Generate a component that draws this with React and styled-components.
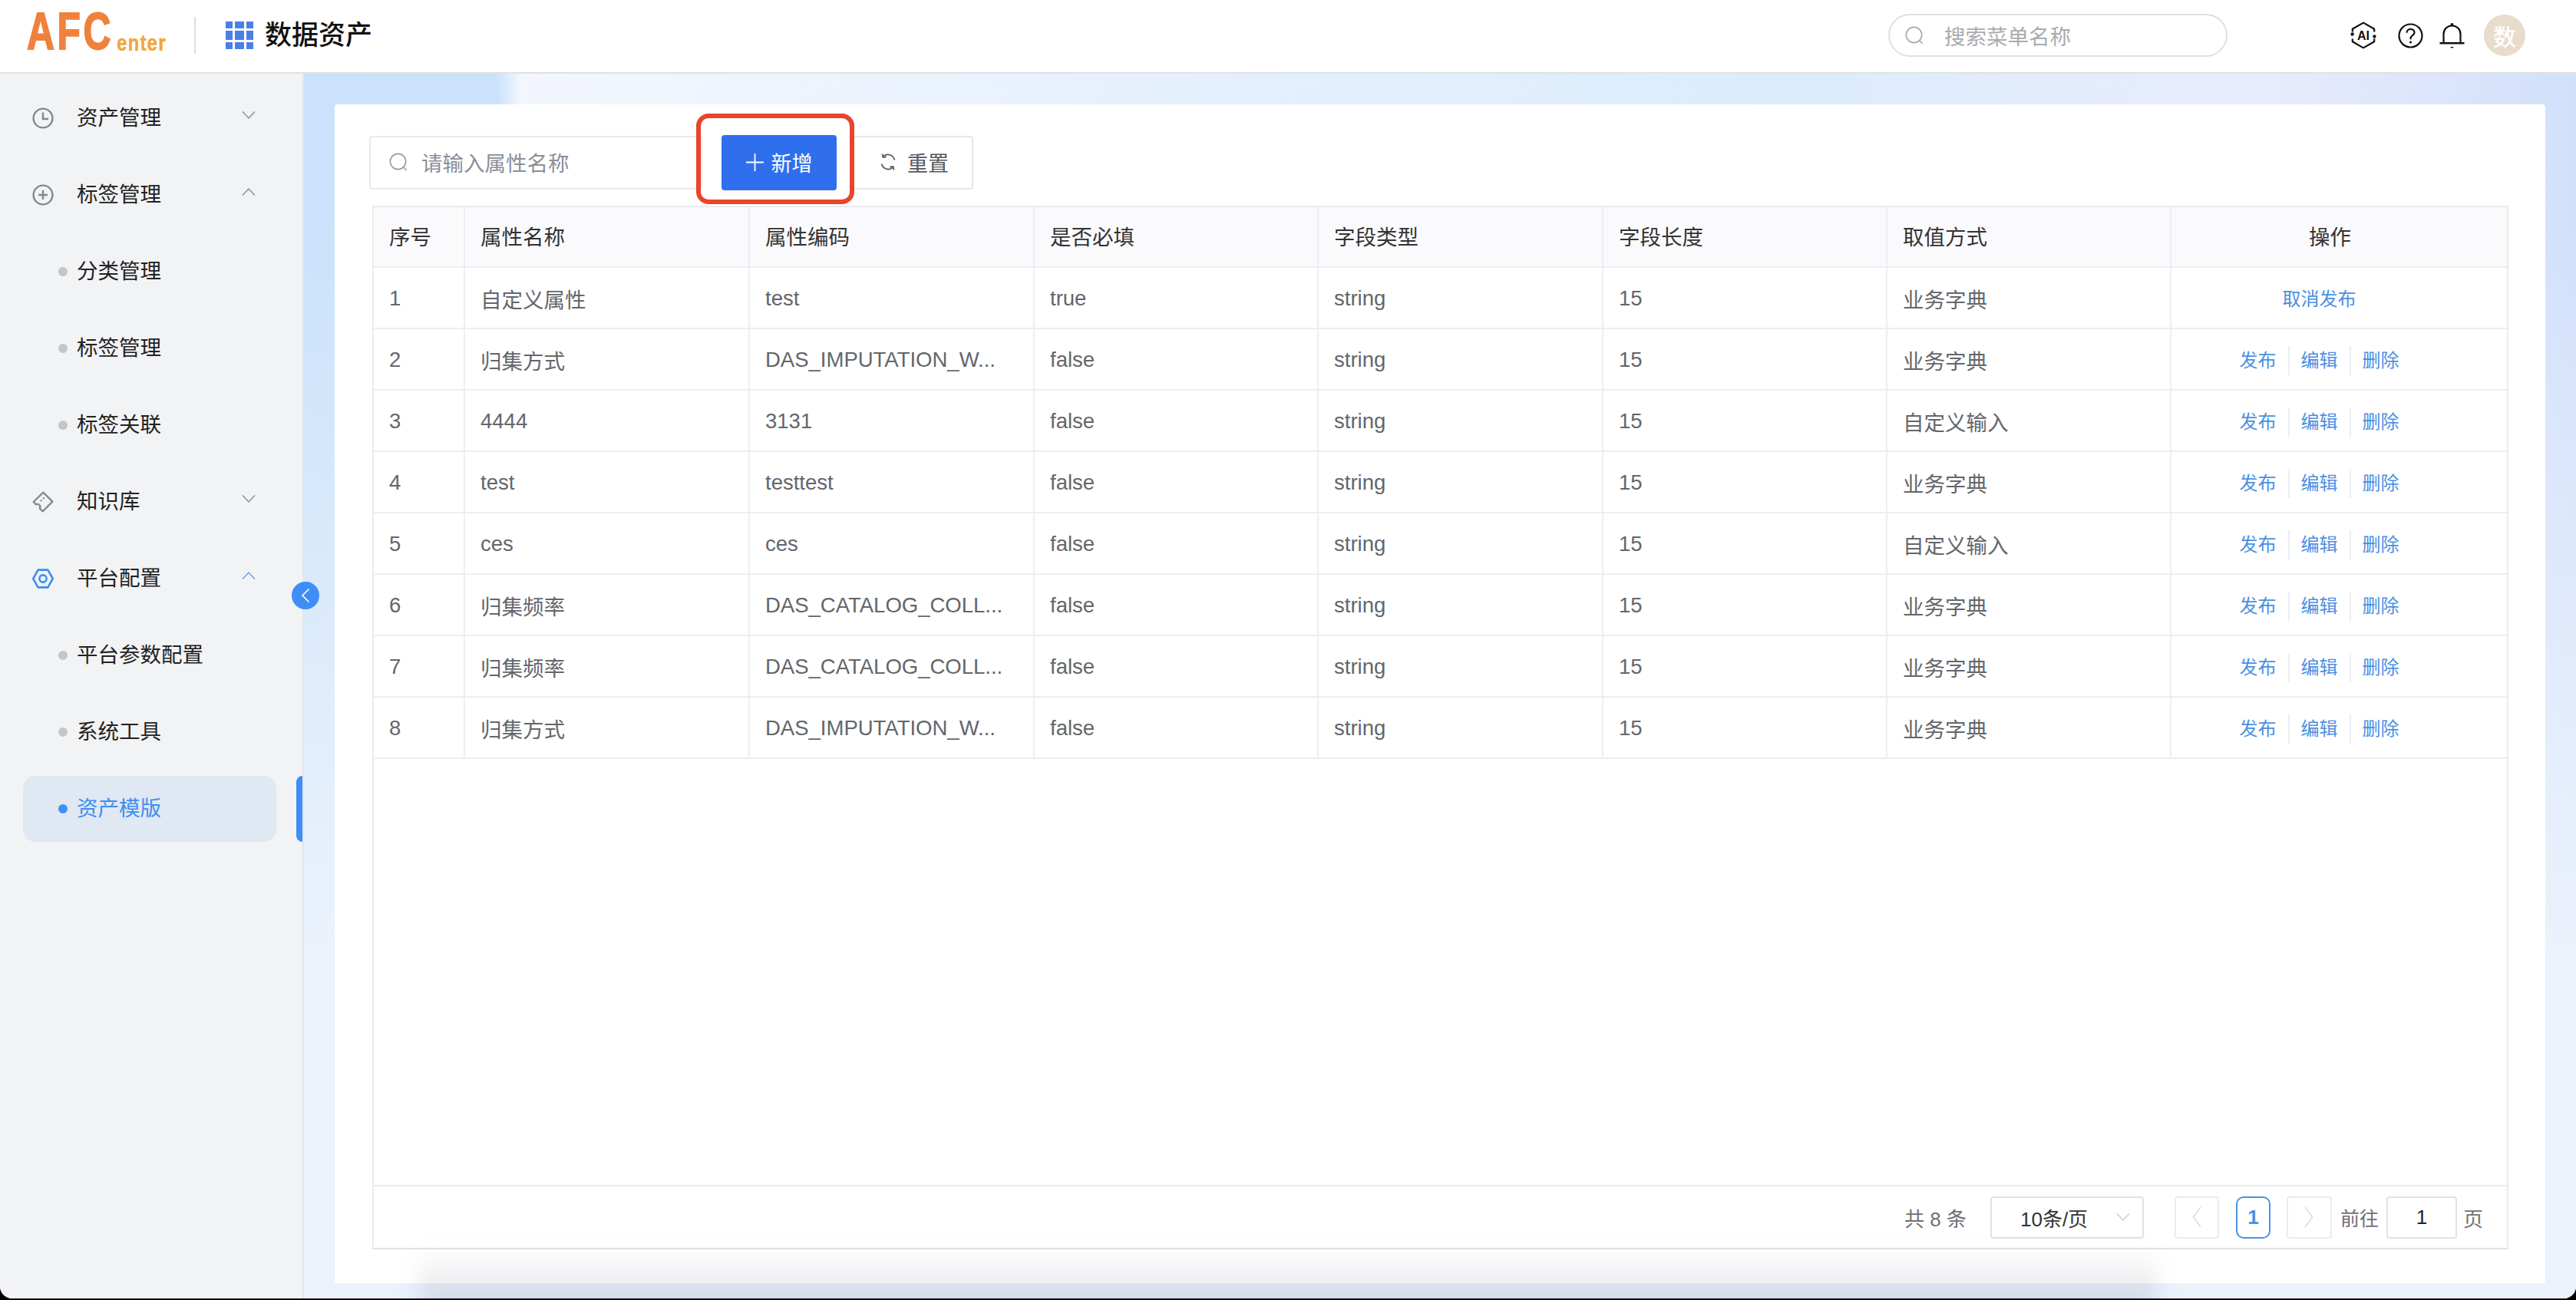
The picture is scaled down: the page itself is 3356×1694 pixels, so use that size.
import React from "react";
import styled, { createGlobalStyle } from "styled-components";

const FONT = `"Liberation Sans", "Noto Sans CJK SC", sans-serif`;

const Global = createGlobalStyle`
  html, body { margin: 0; padding: 0; background: #000; }
  body { font-family: ${FONT}; }
  * { box-sizing: border-box; }
`;

const Screen = styled.div`
  position: relative;
  width: 3356px;
  height: 1692px;
  display: flex;
  flex-direction: column;
  background: #fff;
  border-radius: 0 0 16px 16px;
  overflow: hidden;
`;

const Header = styled.header`
  flex: 0 0 96px;
  display: flex;
  align-items: center;
  padding: 0 66px 2px 35px;
  background: #fff;
  border-bottom: 2px solid #e0e0e2;
`;

const Logo = styled.div`
  flex: 0 0 218px;
  height: 50px;
  margin-bottom: 10px;
  display: flex;
  align-items: flex-end;
  white-space: nowrap;
`;

const LogoMain = styled.span`
  flex: 0 0 117px;
  width: 117px;
  min-width: 0;
  display: block;
  font-family: "Liberation Sans", sans-serif;
  font-weight: 700;
  font-size: 69px;
  line-height: 50px;
  height: 50px;
  letter-spacing: 5px;
  color: #f0813b;
  -webkit-text-stroke: 2px #f0813b;
  transform: scaleX(0.72);
  transform-origin: left bottom;
`;

const LogoSub = styled.span`
  flex: 0 0 66px;
  width: 66px;
  min-width: 0;
  display: block;
  font-family: "Liberation Sans", sans-serif;
  font-weight: 700;
  font-size: 30px;
  line-height: 20px;
  height: 20px;
  letter-spacing: 1.5px;
  color: #f0a743;
  -webkit-text-stroke: 0.6px #f0a743;
  transform: scaleX(0.8);
  transform-origin: left bottom;
`;

const Divider = styled.div`
  flex: 0 0 2px;
  height: 48px;
  background: #dedede;
`;

const GridIcon = styled.div`
  flex: 0 0 36px;
  height: 36px;
  margin-left: 39px;
  display: grid;
  grid-template-columns: 9px 12px 9px;
  grid-template-rows: 9px 12px 9px;
  gap: 3px;
  i { display: block; background: #4a7fe6; }
`;

const Title = styled.div`
  margin-left: 15px;
  font-size: 35px;
  font-weight: 500;
  color: #111;
  line-height: 48px;
`;

const TopSearch = styled.div`
  margin-left: auto;
  width: 442px;
  height: 56px;
  display: flex;
  align-items: center;
  gap: 27px;
  padding-left: 20px;
  border: 2px solid #e0e0e0;
  border-radius: 28px;
  color: #a9abb0;
  font-size: 27.5px;
`;

const HeaderIcons = styled.div`
  margin-left: 159px;
  display: flex;
  align-items: center;
`;

const IconSlot = styled.span`
  display: flex;
  margin-right: ${(p) => p.$gap}px;
`;

const Avatar = styled.div`
  width: 54px;
  height: 54px;
  border-radius: 50%;
  background: #e8dccd;
  color: #fff;
  display: flex;
  align-items: center;
  justify-content: center;
  font-size: 30px;
  font-weight: 500;
`;

const Body = styled.div`
  flex: 1;
  min-height: 0;
  display: flex;
`;

const Sidebar = styled.aside`
  position: relative;
  flex: 0 0 396px;
  padding: 15px 0 0 30px;
  background: #f2f3f5;
  border-right: 2px solid #e4e6ea;
`;

const NavItem = styled.div`
  position: relative;
  width: 330px;
  height: 86px;
  margin-bottom: 14px;
  display: flex;
  align-items: center;
  padding-left: ${(p) => (p.$child ? 46 : 12)}px;
  border-radius: 16px;
  background: ${(p) => (p.$selected ? "#dfe8f3" : "transparent")};
  color: ${(p) => (p.$selected ? "#3f8ef0" : "#222")};
  font-size: 27.5px;
  line-height: 36px;
`;

const NavIcon = styled.span`
  flex: 0 0 28px;
  height: 28px;
  margin-right: 30px;
  display: flex;
`;

const Dot = styled.span`
  flex: 0 0 12px;
  height: 12px;
  margin-right: 12px;
  border-radius: 50%;
  background: ${(p) => (p.$selected ? "#3f8ef7" : "#c4c5c8")};
`;

const NavLabel = styled.span`
  flex: 1;
`;

const NavChevron = styled.span`
  flex: 0 0 18px;
  margin-right: 27px;
  margin-top: -8px;
  display: flex;
`;

const ActiveBar = styled.div`
  position: absolute;
  right: -34px;
  top: 0;
  width: 8px;
  height: 86px;
  border-radius: 8px 0 0 8px;
  background: #3f8ef7;
`;

const CollapseButton = styled.div`
  position: absolute;
  left: 380px;
  top: 662px;
  width: 36px;
  height: 36px;
  border-radius: 50%;
  background: #3f8ef7;
  display: flex;
  align-items: center;
  justify-content: center;
  z-index: 3;
`;

const Main = styled.main`
  flex: 1;
  min-width: 0;
  padding: 40px 40px 20px;
  background:
    linear-gradient(to bottom, rgba(235, 242, 252, 0) 0, rgba(235, 242, 252, 0) 12%, #ebf2fc 72%),
    linear-gradient(90deg, #cae2fb 0, #cbe2fb 8.5%, #f3f6fe 9.5%, #e2effd 45%, #dcecfd 66%, #e8ecfc 86%, #d2e0fb 100%);
`;

const Card = styled.section`
  height: 100%;
  padding: 40px 48px 44px 45px;
  display: flex;
  flex-direction: column;
  background: #fff;
  border-radius: 4px;
`;

const Toolbar = styled.div`
  flex: 0 0 72px;
  display: flex;
  align-items: center;
`;

const SearchField = styled.div`
  width: 434px;
  height: 70px;
  display: flex;
  align-items: center;
  gap: 18px;
  padding: 0 0 2px 24px;
  border: 2px solid #e8eaee;
  border-radius: 4px;
  color: #8a8f99;
  font-size: 27.5px;
`;

const PrimaryWrap = styled.div`
  position: relative;
  margin-left: 25px;
`;

const PrimaryButton = styled.div`
  width: 150px;
  height: 72px;
  display: flex;
  align-items: center;
  justify-content: center;
  gap: 10px;
  padding-bottom: 2px;
  background: #2f6fed;
  border-radius: 4px;
  color: #fff;
  font-size: 27px;
`;

const Annotation = styled.div`
  position: absolute;
  left: -33px;
  top: -28px;
  right: -23px;
  bottom: -18px;
  border: 6px solid #e8452a;
  border-radius: 16px;
  pointer-events: none;
`;

const ResetButton = styled.div`
  width: 160px;
  height: 70px;
  margin-left: 18px;
  display: flex;
  align-items: center;
  justify-content: flex-end;
  gap: 14px;
  padding: 0 30px 2px 0;
  border: 2px solid #e4e6ea;
  border-radius: 4px;
  color: #55585e;
  font-size: 27px;
`;

const TableFrame = styled.div`
  flex: 1;
  min-height: 0;
  margin: 20px 0 0 4px;
  display: flex;
  flex-direction: column;
  border: 2px solid #e9ebef;
  border-bottom-color: #e2e2e2;
`;

const TableArea = styled.div`
  flex: 1;
  min-height: 0;
`;

const Table = styled.table`
  width: 100%;
  table-layout: fixed;
  border-collapse: collapse;
  font-size: 27.5px;
`;

const Col = styled.col`
  width: ${(p) => p.$w}px;
`;

const Th = styled.th`
  height: 78px;
  padding: 0 ${(p) => (p.$center ? "24px" : "20px")} 3px ${(p) => (p.$center ? "0" : "20px")};
  text-align: ${(p) => (p.$center ? "center" : "left")};
  font-weight: 400;
  color: #333;
  background: #fafafc;
  border-right: 2px solid #eceef3;
  border-bottom: 2px solid #eceef3;
  white-space: nowrap;
  &:last-child { border-right: 0; }
`;

const Td = styled.td`
  height: 80px;
  padding: ${(p) => (p.$center ? "0" : "2px 20px 0")};
  color: #63666c;
  border-right: 2px solid #eceef3;
  border-bottom: 2px solid #eceef3;
  white-space: nowrap;
  overflow: hidden;
  &:last-child { border-right: 0; }
`;

const Actions = styled.div`
  display: flex;
  justify-content: center;
  align-items: center;
  padding-right: 52px;
  margin-top: 4px;
`;

const ActionLink = styled.span`
  font-size: 24px;
  color: #4a90e2;
  line-height: 38px;
  padding: 0 15px;
  & + & { border-left: 2px solid #ebedf0; }
`;

const Pagination = styled.div`
  flex: 0 0 82px;
  display: flex;
  align-items: center;
  justify-content: flex-end;
  padding: 0 31px 0 0;
  border-top: 2px solid #e8e9eb;
  font-size: 26px;
  color: #6e7075;
`;

const Total = styled.span`
  margin-right: 31px;
`;

const PageSelect = styled.div`
  width: 200px;
  height: 55px;
  display: flex;
  align-items: center;
  justify-content: space-between;
  padding: 0 16px 0 37px;
  margin-right: 40px;
  border: 2px solid #e2e2e4;
  border-radius: 4px;
  color: #333;
`;

const PageBox = styled.div`
  width: ${(p) => p.$w}px;
  height: 55px;
  margin-right: ${(p) => p.$mr}px;
  display: flex;
  align-items: center;
  justify-content: center;
  border: 2px solid ${(p) => (p.$active ? "#4a90e2" : "#ececee")};
  border-radius: ${(p) => (p.$active ? 10 : 4)}px;
  color: #4a90e2;
  font-size: 26px;
  font-weight: 700;
`;

const GotoText = styled.span`
  font-size: 25px;
  margin-right: 10px;
`;

const GotoInput = styled.div`
  width: 92px;
  height: 55px;
  margin-right: 8px;
  display: flex;
  align-items: center;
  justify-content: center;
  border: 2px solid #e2e2e4;
  border-radius: 4px;
  color: #222;
  font-size: 26px;
`;

const DockShadow = styled.div`
  position: absolute;
  left: 545px;
  right: 545px;
  bottom: -40px;
  height: 108px;
  background: linear-gradient(to bottom, rgba(95, 100, 125, 0) 0, rgba(95, 100, 125, 0.11) 45%, rgba(80, 90, 125, 0.2) 100%);
  filter: blur(14px);
  pointer-events: none;
  z-index: 2;
`;

const Chevron = ({ up, color = "#8a8c92", w = 18 }) => (
  <svg width={w} height={10} viewBox="0 0 18 10" fill="none">
    <path d={up ? "M1 9.5 9 1l8 8.5" : "M1 .5 9 9l8-8.5"} stroke={color} strokeWidth="1.4" />
  </svg>
);

const SearchIcon = ({ color, size = 24 }) => (
  <svg width={size} height={size} viewBox="0 0 24 24" fill="none" stroke={color} strokeWidth="1.7" style={{ flex: "none" }}>
    <circle cx="11.5" cy="11.5" r="10.2" />
    <path d="m19 19 3.5 3.8" />
  </svg>
);

const ClockIcon = () => (
  <svg width="28" height="28" viewBox="0 0 28 28" fill="none" stroke="#85878c" strokeWidth="2.4">
    <circle cx="14" cy="14" r="12.4" />
    <path d="M14 6.5V15h7" />
  </svg>
);

const PlusCircleIcon = () => (
  <svg width="28" height="28" viewBox="0 0 28 28" fill="none" stroke="#85878c" strokeWidth="2.4">
    <circle cx="14" cy="14" r="12.4" />
    <path d="M14 8v12M8 14h12" />
  </svg>
);

const TicketIcon = () => (
  <svg width="28" height="28" viewBox="0 0 28 28" fill="none" stroke="#85878c" strokeWidth="2.2">
    <path d="M1.6 14 14.4 1.6 26.4 13.6 13.6 26.4 9.6 22.4c1.4-1.8.8-3.6-.4-4.6-1.2-1-2.8-1.4-4.2-.4Z" strokeLinejoin="round" />
    <path d="m11 13 6-6" strokeDasharray="2 2.4" />
  </svg>
);

const NutIcon = () => (
  <svg width="28" height="28" viewBox="0 0 28 28" fill="none" stroke="#3f8ef0" strokeWidth="2.6">
    <path d="M7.6 2.6h12.8L26.8 14l-6.4 11.4H7.6L1.2 14Z" strokeLinejoin="round" />
    <circle cx="14" cy="14" r="4.6" />
  </svg>
);

const ResetIcon = () => (
  <svg width="22" height="24" viewBox="0 0 22 24" fill="none" stroke="#55585e" strokeWidth="1.7" style={{ flex: "none" }}>
    <path d="M19.5 9.5A9 9 0 0 0 5 4.6" />
    <path d="M2.5 14.5A9 9 0 0 0 17 19.4" />
    <path d="M3.5 1.5 4.4 6l4.4-.6M18.5 22.5l-.9-4.5-4.4.6" />
  </svg>
);

const AiIcon = () => (
  <svg width="36" height="36" viewBox="0 0 36 36" fill="none" stroke="#111" strokeWidth="2.2">
    <path d="M3.8 13.5V9.8L18 1.6l14.2 8.2v3.7M3.8 22.5v3.7L18 34.4l14.2-8.2v-3.7" strokeLinejoin="round" />
    <circle cx="3.6" cy="16.5" r="2.2" fill="#111" stroke="none" />
    <circle cx="32.4" cy="19.5" r="2.2" fill="#111" stroke="none" />
    <text x="18" y="24" textAnchor="middle" fontFamily="Liberation Sans, sans-serif" fontSize="16" fontWeight="700" fill="#111" stroke="none">AI</text>
  </svg>
);

const HelpIcon = () => (
  <svg width="33" height="33" viewBox="0 0 33 33" fill="none" stroke="#111" strokeWidth="2.2">
    <circle cx="16.5" cy="16.5" r="15" />
    <path d="M11.5 12.8c0-3 2.2-5 5-5s5 2 5 4.6c0 3.6-5 3.8-5 7.6v1.2" />
    <circle cx="16.5" cy="25" r="1.6" fill="#111" stroke="none" />
  </svg>
);

const BellIcon = () => (
  <svg width="33" height="34" viewBox="0 0 33 34" fill="none" stroke="#111" strokeWidth="2.2">
    <circle cx="16.5" cy="3" r="2" fill="#111" stroke="none" />
    <path d="M5.5 27V15.5C5.5 9 10.4 4.5 16.5 4.5S27.5 9 27.5 15.5V27" />
    <path d="M.5 27.2h32" strokeWidth="2.6" />
    <path d="M14 32h5l-2.5 2Z" fill="#111" stroke="none" />
  </svg>
);

const PlusGlyph = () => (
  <svg width="23" height="23" viewBox="0 0 23 23" stroke="#fff" strokeWidth="1.8" style={{ flex: "none" }}>
    <path d="M11.5 0v23M0 11.5h23" />
  </svg>
);

const PagerArrow = ({ left }) => (
  <svg width="12" height="28" viewBox="0 0 12 28" fill="none" stroke="#dcdde0" strokeWidth="1.6">
    <path d={left ? "M11 1 1.5 14 11 27" : "M1 1l9.5 13L1 27"} />
  </svg>
);

const nav = [
  { label: "资产管理", icon: <ClockIcon />, chevron: "down" },
  { label: "标签管理", icon: <PlusCircleIcon />, chevron: "up" },
  { label: "分类管理", child: true },
  { label: "标签管理", child: true },
  { label: "标签关联", child: true },
  { label: "知识库", icon: <TicketIcon />, chevron: "down" },
  { label: "平台配置", icon: <NutIcon />, chevron: "up", blue: true },
  { label: "平台参数配置", child: true },
  { label: "系统工具", child: true },
  { label: "资产模版", child: true, selected: true },
];

const columns = ["序号", "属性名称", "属性编码", "是否必填", "字段类型", "字段长度", "取值方式"];
const widths = [118, 371, 371, 370, 371, 370, 370];

const rows = [
  ["1", "自定义属性", "test", "true", "string", "15", "业务字典", true],
  ["2", "归集方式", "DAS_IMPUTATION_W...", "false", "string", "15", "业务字典"],
  ["3", "4444", "3131", "false", "string", "15", "自定义输入"],
  ["4", "test", "testtest", "false", "string", "15", "业务字典"],
  ["5", "ces", "ces", "false", "string", "15", "自定义输入"],
  ["6", "归集频率", "DAS_CATALOG_COLL...", "false", "string", "15", "业务字典"],
  ["7", "归集频率", "DAS_CATALOG_COLL...", "false", "string", "15", "业务字典"],
  ["8", "归集方式", "DAS_IMPUTATION_W...", "false", "string", "15", "业务字典"],
];

export default function App() {
  return (
    <Screen>
      <Global />
      <Header>
        <Logo>
          <LogoMain>AFC</LogoMain>
          <LogoSub>enter</LogoSub>
        </Logo>
        <Divider />
        <GridIcon>
          {Array.from({ length: 9 }, (_, i) => (
            <i key={i} />
          ))}
        </GridIcon>
        <Title>数据资产</Title>
        <TopSearch>
          <SearchIcon color="#a9abb0" />
          <span>搜索菜单名称</span>
        </TopSearch>
        <HeaderIcons>
          <IconSlot $gap={27}><AiIcon /></IconSlot>
          <IconSlot $gap={21}><HelpIcon /></IconSlot>
          <IconSlot $gap={25}><BellIcon /></IconSlot>
          <Avatar>数</Avatar>
        </HeaderIcons>
      </Header>
      <Body>
        <Sidebar>
          {nav.map((item, i) => (
            <NavItem key={i} $child={item.child} $selected={item.selected}>
              {item.child ? <Dot $selected={item.selected} /> : <NavIcon>{item.icon}</NavIcon>}
              <NavLabel>{item.label}</NavLabel>
              {item.chevron && (
                <NavChevron>
                  <Chevron up={item.chevron === "up"} color={item.blue ? "#6b9fe0" : "#8a8c92"} />
                </NavChevron>
              )}
              {item.selected && <ActiveBar />}
            </NavItem>
          ))}
          <CollapseButton>
            <svg width="12" height="20" viewBox="0 0 12 20" fill="none" stroke="#fff" strokeWidth="1.6">
              <path d="M10.5 1.5 2 10l8.5 8.5" />
            </svg>
          </CollapseButton>
        </Sidebar>
        <Main>
          <Card>
            <Toolbar>
              <SearchField>
                <SearchIcon color="#9a9da3" />
                <span>请输入属性名称</span>
              </SearchField>
              <PrimaryWrap>
                <PrimaryButton>
                  <PlusGlyph />
                  <span>新增</span>
                </PrimaryButton>
                <Annotation />
              </PrimaryWrap>
              <ResetButton>
                <ResetIcon />
                <span>重置</span>
              </ResetButton>
            </Toolbar>
            <TableFrame>
              <TableArea>
                <Table>
                  <colgroup>
                    {widths.map((w, i) => (
                      <Col key={i} $w={w} />
                    ))}
                    <col />
                  </colgroup>
                  <thead>
                    <tr>
                      {columns.map((c) => (
                        <Th key={c}>{c}</Th>
                      ))}
                      <Th $center>操作</Th>
                    </tr>
                  </thead>
                  <tbody>
                    {rows.map((r) => (
                      <tr key={r[0]}>
                        {r.slice(0, 7).map((v, i) => (
                          <Td key={i}>{v}</Td>
                        ))}
                        <Td $center>
                          <Actions>
                            {r[7] ? (
                              <ActionLink>取消发布</ActionLink>
                            ) : (
                              <>
                                <ActionLink>发布</ActionLink>
                                <ActionLink>编辑</ActionLink>
                                <ActionLink>删除</ActionLink>
                              </>
                            )}
                          </Actions>
                        </Td>
                      </tr>
                    ))}
                  </tbody>
                </Table>
              </TableArea>
              <Pagination>
                <Total>共 8 条</Total>
                <PageSelect>
                  <span>10条/页</span>
                  <Chevron color="#c9cacd" />
                </PageSelect>
                <PageBox $w={58} $mr={22}><PagerArrow left /></PageBox>
                <PageBox $w={45} $mr={21} $active>1</PageBox>
                <PageBox $w={59} $mr={11}><PagerArrow /></PageBox>
                <GotoText>前往</GotoText>
                <GotoInput>1</GotoInput>
                <span>页</span>
              </Pagination>
            </TableFrame>
          </Card>
        </Main>
      </Body>
      <DockShadow />
    </Screen>
  );
}
